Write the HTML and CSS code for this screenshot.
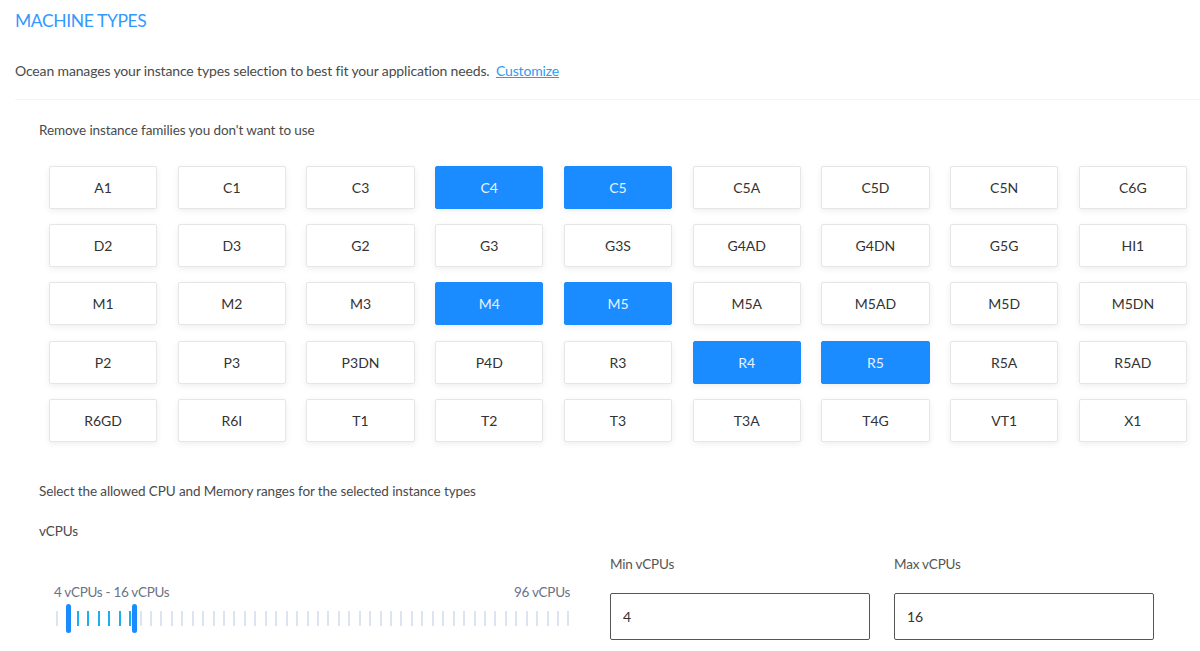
FILE: index.html
```html
<!DOCTYPE html>
<html lang="en">
<head>
    <meta charset="UTF-8">
    <title>Machine Types</title>
    <link rel="stylesheet" href="styles.css">
</head>
<body>
<div class="section">
    <h2 class="title">MACHINE TYPES</h2>
    <p class="intro">Ocean manages your instance types selection to best fit your application needs. <a href="#" class="link">Customize</a></p>

    <div class="panel">
        <p class="hint">Remove instance families you don't want to use</p>
        <ul class="families">
            <li>A1</li><li>C1</li><li>C3</li><li class="on">C4</li><li class="on">C5</li><li>C5A</li><li>C5D</li><li>C5N</li><li>C6G</li>
            <li>D2</li><li>D3</li><li>G2</li><li>G3</li><li>G3S</li><li>G4AD</li><li>G4DN</li><li>G5G</li><li>HI1</li>
            <li>M1</li><li>M2</li><li>M3</li><li class="on">M4</li><li class="on">M5</li><li>M5A</li><li>M5AD</li><li>M5D</li><li>M5DN</li>
            <li>P2</li><li>P3</li><li>P3DN</li><li>P4D</li><li>R3</li><li class="on">R4</li><li class="on">R5</li><li>R5A</li><li>R5AD</li>
            <li>R6GD</li><li>R6I</li><li>T1</li><li>T2</li><li>T3</li><li>T3A</li><li>T4G</li><li>VT1</li><li>X1</li>
        </ul>

        <p class="hint hint-ranges">Select the allowed CPU and Memory ranges for the selected instance types</p>
        <p class="hint hint-vcpu">vCPUs</p>

        <div class="ranges">
            <div class="slider">
                <div class="slider-labels">
                    <span>4 vCPUs - 16 vCPUs</span>
                    <span>96 vCPUs</span>
                </div>
                <div class="ticks">
                    <span></span><span></span><span class="in"></span><span class="in"></span><span class="in"></span><span class="in"></span><span class="in"></span><span class="in"></span><span></span><span></span>
                    <span></span><span></span><span></span><span></span><span></span><span></span><span></span><span></span><span></span><span></span>
                    <span></span><span></span><span></span><span></span><span></span><span></span><span></span><span></span><span></span><span></span>
                    <span></span><span></span><span></span><span></span><span></span><span></span><span></span><span></span><span></span><span></span>
                    <span></span><span></span><span></span><span></span><span></span><span></span><span></span><span></span><span></span><span></span>
                    <i class="thumb thumb-min"></i>
                    <i class="thumb thumb-max"></i>
                </div>
            </div>
            <div class="field">
                <label>Min vCPUs</label>
                <input type="text" value="4">
            </div>
            <div class="field">
                <label>Max vCPUs</label>
                <input type="text" value="16">
            </div>
        </div>
    </div>
</div>
</body>
</html>
```

FILE: styles.css
```css
*{
    margin: 0;
    padding: 0;
    box-sizing: border-box;
}
body{
    font-family: Lato, "Open Sans", sans-serif;
    color: #444;
    background: #fff;
}
.section{
    padding-left: 15px;
}
.title{
    font-size: 17.5px;
    font-weight: 400;
    letter-spacing: -0.4px;
    color: #3399ff;
    line-height: 22px;
    padding-top: 10px;
}
.intro{
    font-size: 14px;
    line-height: 20px;
    letter-spacing: -0.15px;
    color: #4a4a4a;
    margin-top: 29px;
    padding-bottom: 18px;
    border-bottom: 1px solid #f4f4f4;
}
.link{
    color: #2d9bf0;
    margin-left: 3px;
}
.panel{
    padding-left: 24px;
}
.hint{
    font-size: 13.5px;
    line-height: 20px;
    letter-spacing: -0.1px;
    color: #4a4a4a;
}
.panel > .hint:first-child{
    margin-top: 20px;
}
.families{
    list-style: none;
    display: grid;
    grid-template-columns: repeat(9, 1fr);
    grid-auto-rows: 43px;
    column-gap: 20.5px;
    row-gap: 15.2px;
    width: 1138px;
    margin: 26px 0 0 10px;
}
.families li{
    display: flex;
    align-items: center;
    justify-content: center;
    background: #fff;
    border: 1px solid #e6e6e6;
    border-radius: 2px;
    box-shadow: 0 2px 6px rgba(0, 0, 0, 0.07);
    font-size: 14px;
    color: #333;
}
.families li.on{
    background: #1a8cff;
    border-color: #1a8cff;
    color: #e8f2ff;
}
.hint-ranges{
    margin-top: 39px;
}
.hint-vcpu{
    margin-top: 20px;
}
.ranges{
    display: flex;
    align-items: flex-end;
    margin-top: 13px;
}
.slider{
    width: 516px;
    margin-left: 15px;
    padding-bottom: 7px;
}
.slider-labels{
    display: flex;
    justify-content: space-between;
    font-size: 13.5px;
    line-height: 20px;
    letter-spacing: -0.3px;
    color: #6b7384;
}
.ticks{
    position: relative;
    display: flex;
    justify-content: space-between;
    align-items: center;
    height: 29px;
    margin-top: 2px;
    padding-left: 2px;
}
.ticks span{
    width: 2px;
    height: 15px;
    background: #dce4f4;
}
.ticks span.in{
    background: #18b0f2;
}
.thumb{
    position: absolute;
    top: 0;
    width: 5px;
    height: 29px;
    border-radius: 3px;
    background: #1a8cff;
}
.thumb-min{
    left: 12px;
}
.thumb-max{
    left: 78px;
}
.field{
    display: flex;
    flex-direction: column;
    width: 260px;
}
.field:nth-child(2){
    margin-left: 40px;
}
.field + .field{
    margin-left: 24px;
}
.field label{
    font-size: 13.5px;
    line-height: 20px;
    letter-spacing: -0.2px;
    color: #555;
    margin-bottom: 19px;
}
.field input{
    height: 47px;
    border: 1px solid #555;
    border-radius: 2px;
    padding: 0 12px;
    font-family: inherit;
    font-size: 14px;
    color: #333;
    outline: none;
}
```
